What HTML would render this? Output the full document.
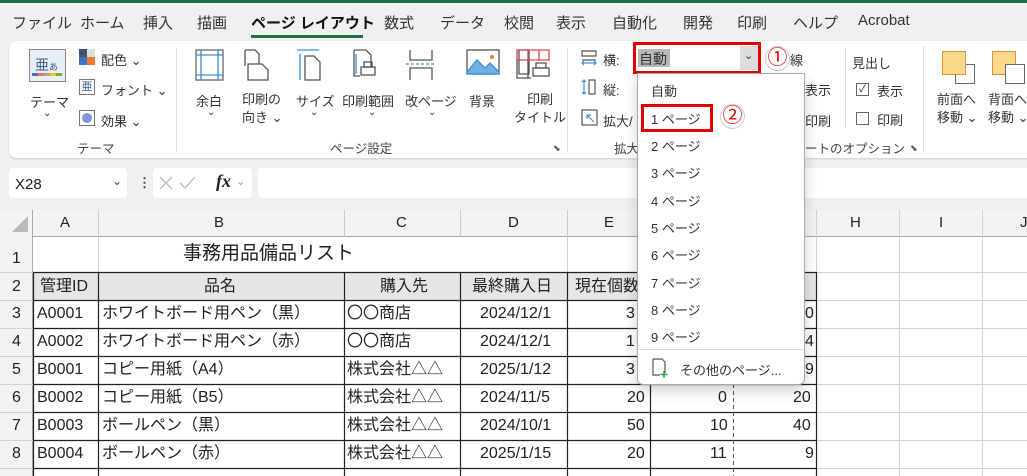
<!DOCTYPE html>
<html><head><meta charset="utf-8"><style>
*{margin:0;padding:0;box-sizing:border-box}
body{width:1027px;height:476px;overflow:hidden;background:#f0f0f0;font-family:"Liberation Sans","Noto Sans CJK JP",sans-serif;position:relative;color:#222}
.a{position:absolute;white-space:nowrap}
.tab{position:absolute;top:12px;font-size:15px;color:#333}
.rb{font-size:13px;color:#333}
.gl{position:absolute;top:138px;font-size:12.5px;color:#444}
.cell{position:absolute;font-size:16px;color:#222;line-height:28px;height:28px}
.vl{position:absolute;width:1px;background:#d4d4d4}
.hl{position:absolute;height:1px;background:#d4d4d4}
.dd{position:absolute;left:651px;font-size:13px;color:#333}
</style></head><body>
<div class="a" style="left:0;top:0;width:1027px;height:3px;background:#1e7145"></div>
<div class="tab" style="left:12px">ファイル</div>
<div class="tab" style="left:80px">ホーム</div>
<div class="tab" style="left:143px">挿入</div>
<div class="tab" style="left:197px">描画</div>
<div class="tab" style="left:251px;font-weight:bold;color:#111">ページ レイアウト</div>
<div class="a" style="left:251px;top:35px;width:112px;height:3px;background:#1e7145"></div>
<div class="tab" style="left:384px">数式</div>
<div class="tab" style="left:440px">データ</div>
<div class="tab" style="left:504px">校閲</div>
<div class="tab" style="left:556px">表示</div>
<div class="tab" style="left:612px">自動化</div>
<div class="tab" style="left:683px">開発</div>
<div class="tab" style="left:737px">印刷</div>
<div class="tab" style="left:793px">ヘルプ</div>
<div class="tab" style="left:858px">Acrobat</div>

<div class="a" style="left:9px;top:41px;width:1030px;height:117px;background:#fff;border-radius:8px;box-shadow:0 1px 2px #ccc"></div>
<div class="a" style="left:29px;top:49px;width:37px;height:33px;border:1px solid #888;background:#e8eef5"></div>
<div class="a rb" style="left:35px;top:55px;font-size:14px;color:#3a5a8a">亜<span style="font-size:9px">あ</span></div>
<div class="a" style="left:32px;top:73px;width:30px;height:3px;background:linear-gradient(90deg,#4472c4 20%,#ed7d31 20% 40%,#a5a5a5 40% 60%,#ffc000 60% 80%,#70ad47 80%)"></div>
<div class="a rb" style="left:30px;top:92px">テーマ</div>
<div class="a rb" style="left:43px;top:108px;font-size:10px">⌄</div>
<div class="a" style="left:79px;top:49px;width:16px;height:16px;background:linear-gradient(90deg,#44546a 50%,#ddd 50%)"></div>
<div class="a" style="left:87px;top:57px;width:8px;height:8px;background:#ed7d31"></div>
<div class="a" style="left:79px;top:57px;width:8px;height:8px;background:#4472c4"></div>
<div class="a rb" style="left:101px;top:50px">配色 ⌄</div>
<div class="a" style="left:79px;top:79px;width:16px;height:16px;border:1px solid #777;font-size:11px;line-height:14px;text-align:center;color:#3a5a8a">亜</div>
<div class="a rb" style="left:101px;top:80px">フォント ⌄</div>
<div class="a" style="left:79px;top:110px;width:16px;height:16px;border:1px solid #777;background:#fff"><div style="margin:2px;width:10px;height:10px;border-radius:50%;background:#7e97d6"></div></div>
<div class="a rb" style="left:101px;top:111px">効果 ⌄</div>
<div class="gl" style="left:77px">テーマ</div>
<div class="a" style="left:176px;top:48px;width:1px;height:104px;background:#ddd"></div>
<svg class="a" style="left:190px;top:48px" width="340" height="36" fill="none" stroke-width="1.3">
<rect x="6" y="2" width="27" height="30" stroke="#666"/><path d="M11 2v30M28 2v30M6 7h27M6 27h27" stroke="#3b8fd9"/>
<path d="M55 2h10l4 4v12M55 2v16" stroke="#555"/><path d="M58 16h14l6 6v10H58z" stroke="#555" fill="#fff"/>
<path d="M110 6v26M107 2h22" stroke="#3b8fd9"/><path d="M115 8h9l6 6v18h-15z" stroke="#555"/>
<path d="M164 2h12l5 5v14M164 2v26h6" stroke="#555"/><path d="M166 6v20" stroke="#3b8fd9"/><rect x="171" y="19" width="14" height="8" stroke="#555" fill="#fff"/><rect x="174" y="14" width="8" height="5" stroke="#555"/>
<path d="M220 2v10h22V2M220 32V20h22v12" stroke="#555"/><path d="M216 16h30" stroke="#3b8fd9" stroke-dasharray="3 2"/>
<rect x="277" y="2" width="32" height="24" stroke="#555"/><path d="M277 24l10-12 8 8 5-5 9 9v2h-32z" fill="#6fb0e0" stroke="#3b8fd9"/><circle cx="302" cy="9" r="2" fill="#ed7d31" stroke="none"/>
<rect x="329" y="2" width="10" height="24" stroke="#555"/>
</svg>
<svg class="a" style="left:515px;top:48px" width="40" height="36" fill="none" stroke-width="1.3"><path d="M2 2h32v10H2zM13 2v10M24 2v10" stroke="#e0474c"/><path d="M2 12v18h14M13 12v18" stroke="#555"/><rect x="18" y="20" width="16" height="8" stroke="#555" fill="#fff"/><rect x="21" y="15" width="10" height="5" stroke="#555"/></svg>
<div class="a rb" style="left:196px;top:91px">余白</div><div class="a rb" style="left:207px;top:107px;font-size:10px">⌄</div>
<div class="a rb" style="left:242px;top:91px;line-height:18px">印刷の<br>向き ⌄</div>
<div class="a rb" style="left:296px;top:91px">サイズ</div><div class="a rb" style="left:310px;top:107px;font-size:10px">⌄</div>
<div class="a rb" style="left:342px;top:91px">印刷範囲</div><div class="a rb" style="left:368px;top:107px;font-size:10px">⌄</div>
<div class="a rb" style="left:405px;top:91px">改ページ</div><div class="a rb" style="left:428px;top:107px;font-size:10px">⌄</div>
<div class="a rb" style="left:469px;top:91px">背景</div>
<div class="a rb" style="left:514px;top:91px;line-height:18px;text-align:center">印刷<br>タイトル</div>
<div class="gl" style="left:330px">ページ設定</div>
<div class="a" style="left:553px;top:143px;font-size:9px;color:#555">⬊</div>
<div class="a" style="left:567px;top:48px;width:1px;height:104px;background:#ddd"></div>
<svg class="a" style="left:580px;top:48px" width="20" height="82" fill="none" stroke-width="1.2"><path d="M2 3h14v5H2zM2 12h14" stroke="#555"/><path d="M2 15h14M4 13l-2 2 2 2M14 13l2 2-2 2" stroke="#3b8fd9"/><path d="M4 32v14M2 34l2-2 2 2M2 44l2 2 2-2" stroke="#3b8fd9"/><rect x="9" y="32" width="6" height="14" stroke="#555"/><rect x="2" y="62" width="15" height="15" stroke="#555"/><path d="M7 67l7 7M7 67h4M7 67v4" stroke="#3b8fd9"/></svg>
<div class="a rb" style="left:603px;top:50px">横:</div>
<div class="a rb" style="left:603px;top:80px">縦:</div>
<div class="a rb" style="left:603px;top:111px">拡大/</div>
<div class="gl" style="left:614px">拡大</div>
<div class="a" style="left:633px;top:42px;width:128px;height:32px;border:3px solid #e00000;background:#fff"></div>
<div class="a" style="left:638px;top:49px;width:32px;height:18px;background:#b8b8b8"></div>
<div class="a rb" style="left:639px;top:49px;font-size:14px">自動</div>
<div class="a" style="left:740px;top:46px;width:18px;height:24px;background:#ddd"></div>
<div class="a rb" style="left:744px;top:49px;font-size:11px">⌄</div>
<div class="a" style="left:765px;top:46px;width:25px;height:25px;border-radius:50%;background:#fff;border:1px solid #ccc;color:#d00;font-size:20px;line-height:23px;text-align:center">①</div>
<div class="a rb" style="left:790px;top:50px">線</div>
<div class="a rb" style="left:805px;top:80px">表示</div>
<div class="a rb" style="left:805px;top:111px">印刷</div>
<div class="gl" style="left:805px">ートのオプション</div>
<div class="a" style="left:910px;top:143px;font-size:9px;color:#555">⬊</div>
<div class="a" style="left:845px;top:48px;width:1px;height:80px;background:#ddd"></div>
<div class="a rb" style="left:852px;top:53px">見出し</div>
<div class="a" style="left:856px;top:83px;width:13px;height:13px;border:1px solid #666;font-size:10px;line-height:11px;text-align:center">✓</div>
<div class="a rb" style="left:877px;top:81px">表示</div>
<div class="a" style="left:856px;top:112px;width:13px;height:13px;border:1px solid #666"></div>
<div class="a rb" style="left:877px;top:110px">印刷</div>
<div class="a" style="left:923px;top:46px;width:1px;height:106px;background:#ddd"></div>
<div class="a" style="left:955px;top:64px;width:20px;height:20px;border:1.5px solid #666;background:#fff"></div>
<div class="a" style="left:942px;top:51px;width:24px;height:24px;border:1.5px solid #e8912d;background:#fbd98a"></div>
<div class="a" style="left:992px;top:51px;width:24px;height:24px;border:1.5px solid #e8912d;background:#fbd98a"></div>
<div class="a" style="left:1005px;top:64px;width:20px;height:20px;border:1.5px solid #666;background:#fff"></div>
<div class="a rb" style="left:937px;top:91px;line-height:18px">前面へ<br>移動 ⌄</div>
<div class="a rb" style="left:988px;top:91px;line-height:18px">背面へ<br>移動 ⌄</div>

<div class="a" style="left:9px;top:168px;width:118px;height:30px;background:#fff;border-radius:4px"></div>
<div class="a" style="left:15px;top:176px;font-size:15px">X28</div>
<div class="a" style="left:112px;top:174px;font-size:12px;color:#444">⌄</div>
<div class="a" style="left:138px;top:175px;font-size:13px;color:#444;font-weight:bold">⋮</div>
<div class="a" style="left:153px;top:168px;width:99px;height:30px;background:#fff;border-radius:4px"></div>
<svg class="a" style="left:158px;top:175px" width="50" height="16" fill="none" stroke="#bbb" stroke-width="1.3"><path d="M2 2l12 12M14 2L2 14M22 8l5 5 10-11"/></svg>
<div class="a" style="left:216px;top:171px;font-size:18px;font-style:italic;font-family:'Liberation Serif',serif;font-weight:bold">fx</div>
<div class="a" style="left:236px;top:175px;font-size:11px;color:#999">⌄</div>
<div class="a" style="left:258px;top:168px;width:780px;height:30px;background:#fff;border-radius:4px"></div>

<div class="a" style="left:0;top:210px;width:1027px;height:266px;background:#fff"></div>
<div class="a" style="left:0;top:210px;width:1027px;height:27px;background:#f3f3f3;border-bottom:1px solid #aaa"></div>
<div class="a" style="left:0;top:210px;width:33px;height:266px;background:#f3f3f3;border-right:1px solid #aaa"></div>
<svg class="a" style="left:10px;top:214px" width="20" height="20"><path d="M18 2v16H2z" fill="#bbb"/></svg>
<div class="vl" style="left:98px;top:210px;height:27px;background:#ccc"></div>
<div class="vl" style="left:344px;top:210px;height:27px;background:#ccc"></div>
<div class="vl" style="left:460px;top:210px;height:27px;background:#ccc"></div>
<div class="vl" style="left:567px;top:210px;height:27px;background:#ccc"></div>
<div class="vl" style="left:650px;top:210px;height:27px;background:#ccc"></div>
<div class="vl" style="left:733px;top:210px;height:27px;background:#ccc"></div>
<div class="vl" style="left:816px;top:210px;height:266px"></div>
<div class="vl" style="left:899px;top:210px;height:266px"></div>
<div class="vl" style="left:982px;top:210px;height:266px"></div>
<div class="vl" style="left:98px;top:237px;height:35px"></div>
<div class="vl" style="left:567px;top:237px;height:35px"></div>
<div class="vl" style="left:650px;top:237px;height:35px"></div>
<div class="vl" style="left:733px;top:237px;height:35px"></div>
<div class="hl" style="left:816px;top:272px;width:211px"></div>
<div class="hl" style="left:816px;top:300px;width:211px"></div>
<div class="hl" style="left:816px;top:328px;width:211px"></div>
<div class="hl" style="left:816px;top:356px;width:211px"></div>
<div class="hl" style="left:816px;top:384px;width:211px"></div>
<div class="hl" style="left:816px;top:412px;width:211px"></div>
<div class="hl" style="left:816px;top:440px;width:211px"></div>
<div class="hl" style="left:816px;top:468px;width:211px"></div>
<div class="hl" style="left:0;top:272px;width:33px"></div><div class="hl" style="left:0;top:300px;width:33px"></div><div class="hl" style="left:0;top:328px;width:33px"></div><div class="hl" style="left:0;top:356px;width:33px"></div><div class="hl" style="left:0;top:384px;width:33px"></div><div class="hl" style="left:0;top:412px;width:33px"></div><div class="hl" style="left:0;top:440px;width:33px"></div><div class="hl" style="left:0;top:468px;width:33px"></div>
<div class="cell" style="left:60px;top:209px;font-size:15px">A</div>
<div class="cell" style="left:214px;top:209px;font-size:15px">B</div>
<div class="cell" style="left:396px;top:209px;font-size:15px">C</div>
<div class="cell" style="left:508px;top:209px;font-size:15px">D</div>
<div class="cell" style="left:604px;top:209px;font-size:15px">E</div>
<div class="cell" style="left:850px;top:209px;font-size:15px">H</div>
<div class="cell" style="left:939px;top:209px;font-size:15px">I</div>
<div class="cell" style="left:1020px;top:209px;font-size:15px">J</div>
<div class="cell" style="left:12px;top:245px">1</div>
<div class="cell" style="left:12px;top:273px">2</div>
<div class="cell" style="left:12px;top:300px">3</div>
<div class="cell" style="left:12px;top:328px">4</div>
<div class="cell" style="left:12px;top:356px">5</div>
<div class="cell" style="left:12px;top:384px">6</div>
<div class="cell" style="left:12px;top:412px">7</div>
<div class="cell" style="left:12px;top:440px">8</div>
<div class="cell" style="left:183px;top:240px;font-size:19px">事務用品備品リスト</div>
<div class="a" style="left:33px;top:272px;width:784px;height:28px;background:#e7e6e6"></div>
<svg class="a" style="left:0;top:0" width="1027" height="476">
<g stroke="#222" stroke-width="1.2">
<path d="M33 272.5H817M33 300.5H817M33 328.5H817M33 356.5H817M33 384.5H817M33 412.5H817M33 440.5H817M33 468.5H817"/>
<path d="M33.5 272V476M98.5 272V476M344.5 272V476M460.5 272V476M567.5 272V476M650.5 272V476M816.5 272V476"/>
</g>
<path d="M733.5 272V476" stroke="#555" stroke-dasharray="4 3"/>
</svg>
<div class="cell" style="left:40px;top:273px">管理ID</div>
<div class="cell" style="left:204px;top:273px">品名</div>
<div class="cell" style="left:380px;top:273px">購入先</div>
<div class="cell" style="left:472px;top:273px">最終購入日</div>
<div class="cell" style="left:575px;top:273px">現在個数</div>
<div class="cell" style="left:37px;top:300px">A0001</div><div class="cell" style="left:102px;top:300px">ホワイトボード用ペン（黒）</div><div class="cell" style="left:347px;top:300px">〇〇商店</div><div class="cell" style="left:480px;top:300px">2024/12/1</div>
<div class="cell" style="left:37px;top:328px">A0002</div><div class="cell" style="left:102px;top:328px">ホワイトボード用ペン（赤）</div><div class="cell" style="left:347px;top:328px">〇〇商店</div><div class="cell" style="left:480px;top:328px">2024/12/1</div>
<div class="cell" style="left:37px;top:356px">B0001</div><div class="cell" style="left:102px;top:356px">コピー用紙（A4）</div><div class="cell" style="left:347px;top:356px">株式会社△△</div><div class="cell" style="left:480px;top:356px">2025/1/12</div>
<div class="cell" style="left:37px;top:384px">B0002</div><div class="cell" style="left:102px;top:384px">コピー用紙（B5）</div><div class="cell" style="left:347px;top:384px">株式会社△△</div><div class="cell" style="left:480px;top:384px">2024/11/5</div>
<div class="cell" style="left:37px;top:412px">B0003</div><div class="cell" style="left:102px;top:412px">ボールペン（黒）</div><div class="cell" style="left:347px;top:412px">株式会社△△</div><div class="cell" style="left:480px;top:412px">2024/10/1</div>
<div class="cell" style="left:37px;top:440px">B0004</div><div class="cell" style="left:102px;top:440px">ボールペン（赤）</div><div class="cell" style="left:347px;top:440px">株式会社△△</div><div class="cell" style="left:480px;top:440px">2025/1/15</div>
<div class="cell" style="left:626px;top:300px">3</div><div class="cell" style="left:805px;top:300px">0</div>
<div class="cell" style="left:626px;top:328px">1</div><div class="cell" style="left:805px;top:328px">4</div>
<div class="cell" style="left:626px;top:356px">3</div><div class="cell" style="left:805px;top:356px">9</div>
<div class="cell" style="left:627px;top:384px">20</div><div class="cell" style="left:718px;top:384px">0</div><div class="cell" style="left:793px;top:384px">20</div>
<div class="cell" style="left:627px;top:412px">50</div><div class="cell" style="left:710px;top:412px">10</div><div class="cell" style="left:793px;top:412px">40</div>
<div class="cell" style="left:627px;top:440px">20</div><div class="cell" style="left:710px;top:440px">11</div><div class="cell" style="left:805px;top:440px">9</div>

<div class="a" style="left:637px;top:73px;width:168px;height:312px;background:#fff;border:1px solid #aaa;border-radius:0 0 6px 6px;box-shadow:0 6px 14px rgba(0,0,0,.18)"></div>
<div class="dd" style="top:81px">自動</div>
<div class="dd" style="top:109px">1 ページ</div>
<div class="dd" style="top:136px">2 ページ</div>
<div class="dd" style="top:163px">3 ページ</div>
<div class="dd" style="top:191px">4 ページ</div>
<div class="dd" style="top:218px">5 ページ</div>
<div class="dd" style="top:245px">6 ページ</div>
<div class="dd" style="top:273px">7 ページ</div>
<div class="dd" style="top:300px">8 ページ</div>
<div class="dd" style="top:327px">9 ページ</div>
<div class="a" style="left:639px;top:349px;width:164px;height:1px;background:#ddd"></div>
<svg class="a" style="left:651px;top:357px" width="20" height="22" fill="none"><path d="M2 2h9l3 3v11M2 2v16h7" stroke="#555" stroke-width="1.2"/><path d="M13 14v7M9.5 17.5h7" stroke="#2ea043" stroke-width="1.5"/></svg>
<div class="dd" style="left:680px;top:360px">その他のページ...</div>
<div class="a" style="left:641px;top:104px;width:72px;height:28px;border:3px solid #e00000"></div>
<div class="a" style="left:720px;top:104px;width:25px;height:25px;border-radius:50%;background:#fff;border:1px solid #ccc;color:#d00;font-size:20px;line-height:23px;text-align:center">②</div>
</body></html>
